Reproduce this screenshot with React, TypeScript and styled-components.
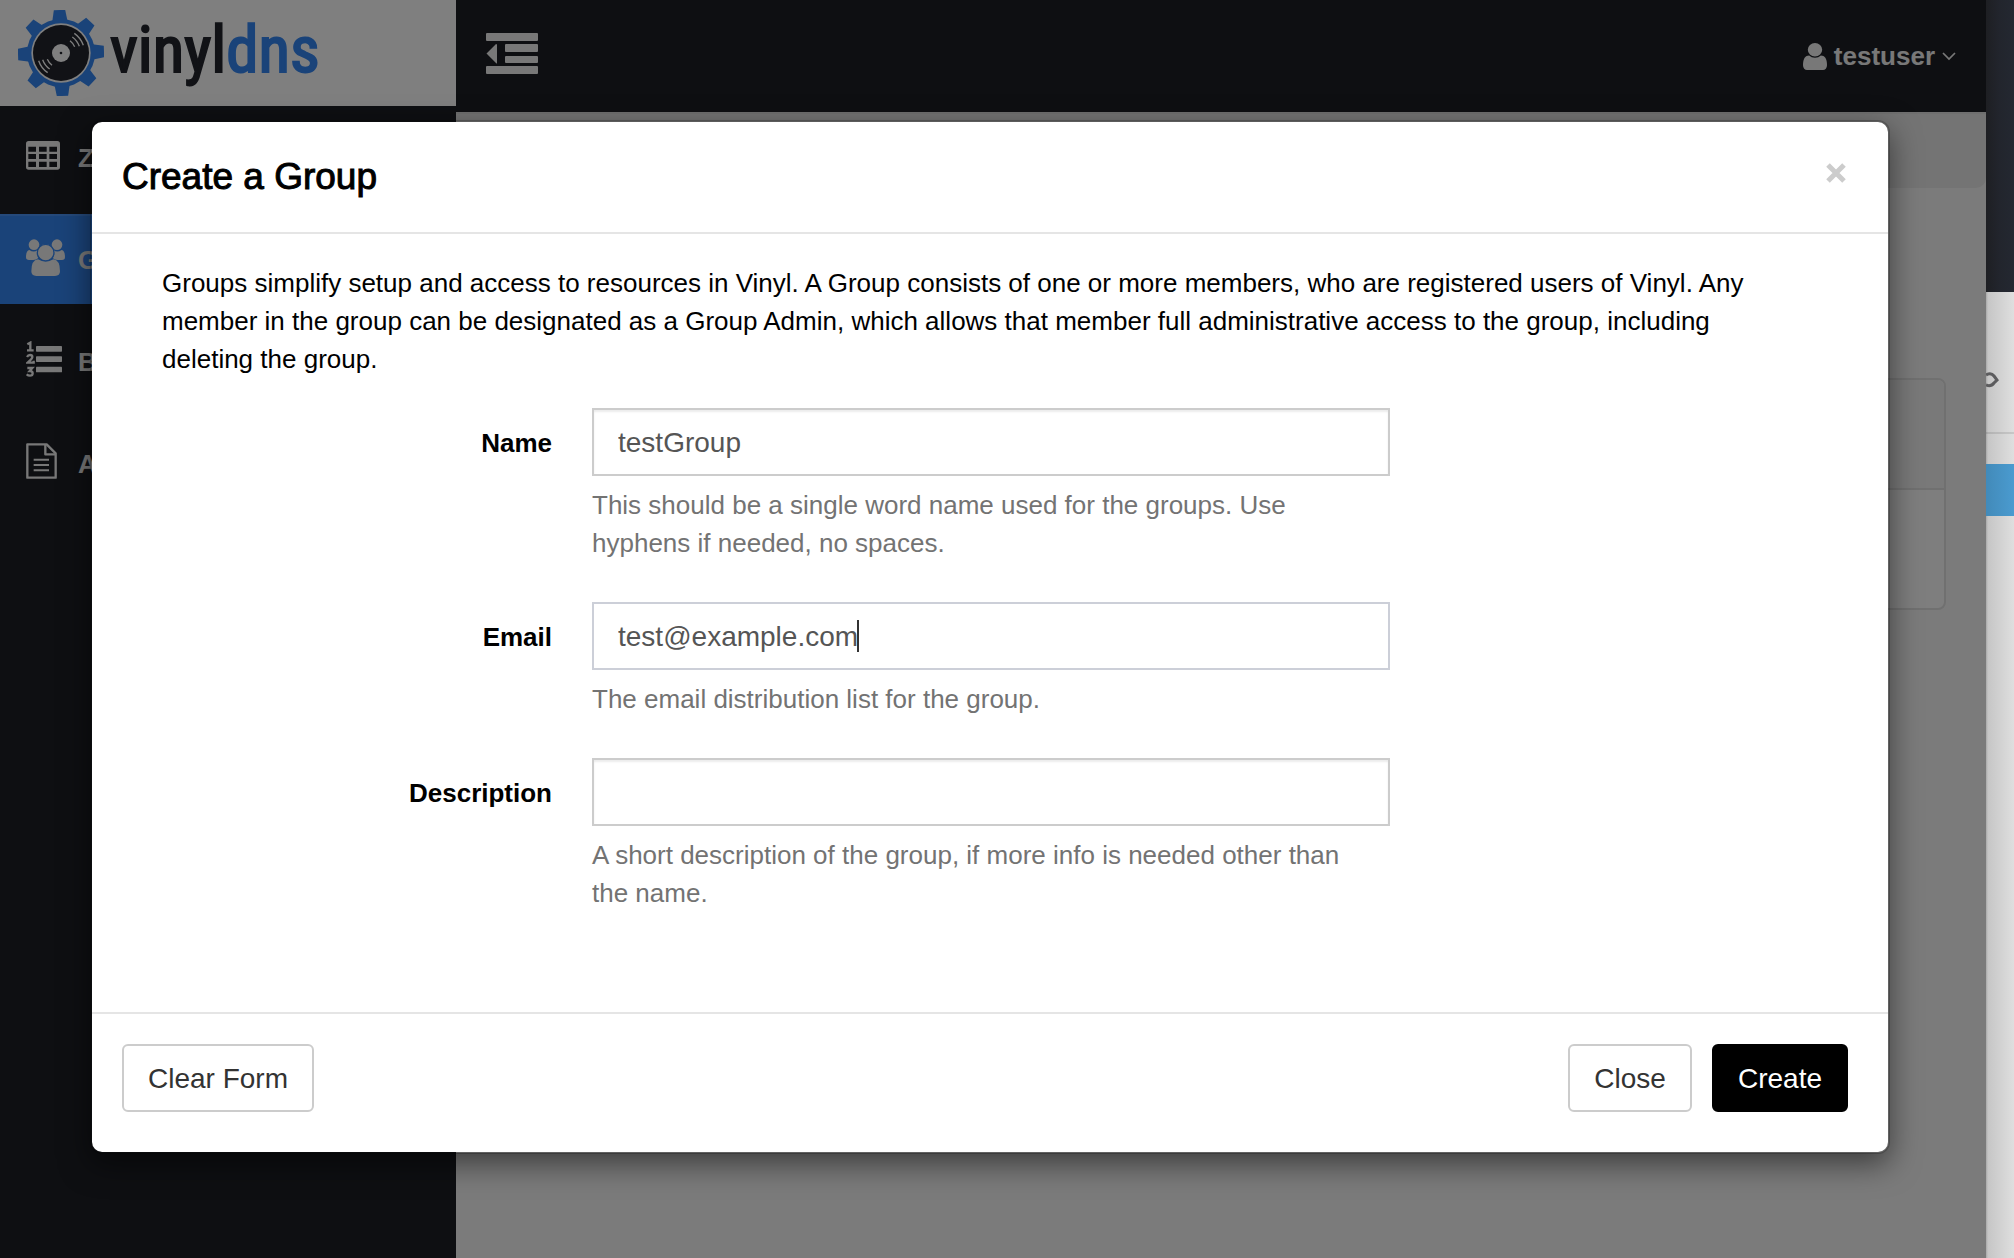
import React, { useState } from "react";
import styled, { createGlobalStyle, css } from "styled-components";

const GlobalStyle = createGlobalStyle`
  *, *::before, *::after { box-sizing: border-box; }
  body {
    margin: 0;
    overflow: hidden;
    font-family: "Liberation Sans", Arial, sans-serif;
    font-size: 26px;
    line-height: 38px;
    color: #000;
  }
`;

const Desktop = styled.div`
  display: flex;
  min-height: 100vh;
`;

const Browser = styled.div`
  position: relative;
  flex: 1;
  min-width: 0;
  display: flex;
  background: #f7f7f7;
`;

/* Sidebar */

const Sidebar = styled.nav`
  flex: 0 0 456px;
  background: #1c1f25;
`;

const Brand = styled.a`
  display: flex;
  align-items: center;
  gap: 6px;
  height: 106px;
  margin-bottom: 6px;
  padding-left: 18px;
  background: #fff;
  text-decoration: none;
`;

const Wordmark = styled.span`
  padding-bottom: 6px;
  font-family: "Roboto Condensed", "Liberation Sans", sans-serif;
  font-size: 65px;
  line-height: 90px;
  font-weight: 400;
  color: #22242c;
  -webkit-text-stroke: 2px currentColor;
`;

const WordmarkAccent = styled.span`
  color: #3486f2;
`;

const Menu = styled.ul`
  display: grid;
  gap: 12px;
  margin: 0;
  padding: 0;
  list-style: none;
`;

const MenuLink = styled.a<{ $active?: boolean }>`
  display: flex;
  align-items: center;
  height: 90px;
  padding: 0 26px;
  border-top: 2px solid transparent;
  color: #f0f0f0;
  font-weight: 700;
  text-decoration: none;
  ${(p) =>
    p.$active &&
    css`
      background: #3486f2;
      border-top-color: #4a93f5;
    `}
`;

const MenuIcon = styled.span`
  flex: 0 0 52px;
  display: flex;
  padding-bottom: 6px;
`;

/* Main column */

const Main = styled.main`
  flex: 1;
  min-width: 0;
`;

const TopBar = styled.header`
  display: flex;
  align-items: center;
  justify-content: space-between;
  height: 112px;
  padding: 0 30px;
  background: #1c1f25;
`;

const BarButton = styled.button`
  display: flex;
  align-items: center;
  gap: 7px;
  padding: 0;
  border: 0;
  background: none;
  color: #f0f0f0;
  font: inherit;
  font-weight: 700;
`;

const ToggleButton = styled(BarButton)`
  padding-bottom: 4px;
`;

const Breadcrumb = styled.div`
  height: 76px;
  border-top: 2px solid #dedede;
  border-radius: 0 0 10px 0;
  background: #e9e9e9;
`;

const Panel = styled.section`
  margin: 190px 40px 0;
  border: 2px solid #e0e0e0;
  border-radius: 8px;
  background: #fdfdfd;
`;

const PanelHead = styled.div`
  height: 110px;
  border-bottom: 2px solid #e0e0e0;
  border-radius: 6px 6px 0 0;
  background: #f3f3f3;
`;

const PanelBody = styled.div`
  height: 118px;
`;

/* Modal */

const Backdrop = styled.div`
  position: absolute;
  inset: 0;
  padding: 120px 96px 104px 90px;
  background: rgba(0, 0, 0, 0.5);
`;

const Dialog = styled.div`
  border: 2px solid rgba(0, 0, 0, 0.2);
  border-radius: 12px;
  background: #fff;
  background-clip: padding-box;
  box-shadow: 0 10px 30px rgba(0, 0, 0, 0.5);
`;

const DialogHead = styled.div`
  display: flex;
  justify-content: space-between;
  padding: 30px;
  border-bottom: 2px solid #e5e5e5;
`;

const DialogTitle = styled.h1`
  margin: 0;
  font-size: 37px;
  line-height: 50px;
  font-weight: 400;
  -webkit-text-stroke: 1px #000;
`;

const CloseIcon = styled.button`
  display: flex;
  align-self: flex-start;
  margin: 11px 12px;
  padding: 0;
  border: 0;
  background: none;
  color: #ccc;
`;

const DialogBody = styled.div`
  padding: 30px 70px 60px;
`;

const Intro = styled.p`
  margin: 0 0 30px;
  padding-right: 30px;
`;

const Field = styled.div`
  display: grid;
  grid-template-columns: 390px minmax(0, 798px);
  column-gap: 40px;
  margin-bottom: 40px;
`;

const Label = styled.label`
  line-height: 70px;
  font-weight: 700;
  text-align: right;
`;

const InputWrap = styled.div`
  position: relative;
`;

const Input = styled.input<{ $focused?: boolean }>`
  display: block;
  width: 100%;
  height: 68px;
  padding: 2px 24px 0;
  border: 2px solid ${(p) => (p.$focused ? "#cccfd8" : "#ccc")};
  border-radius: 0;
  outline: none;
  background: #fff;
  box-shadow: ${(p) => (p.$focused ? "none" : "inset 0 2px 2px rgba(0, 0, 0, 0.08)")};
  color: #555;
  font: inherit;
  font-size: 28px;
`;

const Caret = styled.span`
  position: absolute;
  top: 18px;
  left: 265px;
  width: 2px;
  height: 32px;
  background: #333;
`;

const Help = styled.p`
  margin: 10px 0 0;
  padding-right: 20px;
  color: #737373;
`;

const DialogFoot = styled.div`
  display: flex;
  gap: 20px;
  padding: 30px 40px 40px 30px;
  border-top: 2px solid #e5e5e5;
`;

const Button = styled.button<{ $primary?: boolean; $pushed?: boolean }>`
  height: 68px;
  padding: 2px 24px 0;
  border: 2px solid ${(p) => (p.$primary ? "#000" : "#ccc")};
  border-radius: 6px;
  background: ${(p) => (p.$primary ? "#000" : "#fff")};
  color: ${(p) => (p.$primary ? "#fff" : "#333")};
  margin-right: ${(p) => (p.$pushed ? "auto" : "0")};
  font: inherit;
  font-size: 28px;
`;

/* Window lying behind the browser */

const BackWindow = styled.aside`
  flex: 0 0 28px;
  display: flex;
  flex-direction: column;
  background: linear-gradient(90deg, #a8a8a8 0, #c6c6c6 2px, #dfdfdf 28px);
`;

const BackHead = styled.div`
  height: 292px;
  background: linear-gradient(90deg, #1e1f23 0, #22252d 14px, #242831 28px);
`;

const BackRow = styled.div`
  display: flex;
  align-items: flex-end;
  height: 142px;
  padding-bottom: 44px;
  border-bottom: 2px solid rgba(0, 0, 0, 0.1);
`;

const BackStripe = styled.div`
  height: 52px;
  margin-top: 30px;
  background: linear-gradient(90deg, #428ab9, #4a9bd0);
`;

const Gear = () => (
  <svg width="86" height="86" viewBox="24 30 258 258" aria-hidden="true">
    <g fill="#3486f2">
      <circle cx="153" cy="159" r="102" />
      {[0, 45, 90, 135, 180, 225, 270, 315].map((a) => (
        <path key={a} d="M136 30h34l7 40h-48z" transform={`rotate(${a - 2} 153 159)`} />
      ))}
    </g>
    <circle cx="153" cy="159" r="89" fill="#fff" />
    <circle cx="153" cy="159" r="84" fill="#22242c" />
    <circle cx="153" cy="159" r="27" fill="#fff" />
    <circle cx="153" cy="159" r="4" fill="#22242c" />
    {[0, 180].map((a) => (
      <g key={a} transform={`rotate(${a} 153 159)`} fill="none" stroke="#fff" strokeWidth="4">
        <path d="M180 122A46 46 0 0 1 194 140" />
        <path d="M187 111A59 59 0 0 1 208 139" />
        <path d="M193 100A71 71 0 0 1 220 136" />
      </g>
    ))}
  </svg>
);

const TableIcon = () => (
  <svg width="34" height="29" viewBox="78 28 102 87" aria-hidden="true">
    <path
      fill="currentColor"
      fillRule="evenodd"
      d="M86 28h86q8 0 8 8v70q0 8-8 8H86q-8 0-8-8V36q0-8 8-8zM85 45v15h23V45zM117 45v15h23V45zM148 45v15h23V45zM85 67v15h23V67zM117 67v15h23V67zM148 67v15h23V67zM85 90v16h23V90zM117 90v16h23V90zM148 90v16h23V90z"
    />
  </svg>
);

const GroupIcon = () => (
  <svg width="39" height="37" viewBox="77 325 117 111" fill="currentColor" aria-hidden="true">
    <circle cx="101" cy="342" r="16" />
    <circle cx="170" cy="342" r="16" />
    <path d="M87 358q13 9 24 1-3 14 4 22-7 7-16 7H86q-9 0-9-8 0-20 10-22z" />
    <path d="M184 358q-13 9-24 1 3 14-4 22 7 7 16 7h13q9 0 9-8 0-20-10-22z" />
    <circle cx="136" cy="366" r="25" stroke="#3486f2" strokeWidth="4" />
    <path d="M113 386q23 14 46 0 20 2 20 36 0 14-15 14h-56q-15 0-15-14 0-34 20-36z" />
  </svg>
);

const ListIcon = () => (
  <svg width="36" height="36" viewBox="78 633 108 108" aria-hidden="true">
    <g fill="currentColor">
      <rect x="108" y="648" width="78" height="17" rx="2" />
      <rect x="108" y="679" width="78" height="17" rx="2" />
      <rect x="108" y="710" width="78" height="17" rx="2" />
    </g>
    <g fill="none" stroke="currentColor" strokeWidth="7">
      <path d="M82 643l9-5v22M81 661h20" />
      <path d="M81 681q3-6 9-6 7 0 7 6 0 5-14 17h18v-6" />
      <path d="M82 714h15l-8 9q9 0 9 7 0 7-8 7-6 0-10-4" />
    </g>
  </svg>
);

const DocIcon = () => (
  <svg width="31" height="36" viewBox="78 939 93 108" aria-hidden="true">
    <g fill="none" stroke="currentColor" strokeWidth="7" strokeLinejoin="round">
      <path d="M82 943h58l27 27v73H82z" />
      <path d="M136 943v30h31" />
      <path d="M101 989h46M101 1005h46M101 1021h46" strokeWidth="6" />
    </g>
  </svg>
);

const OutdentIcon = () => (
  <svg width="52" height="42" viewBox="0 0 52 42" fill="currentColor" aria-hidden="true">
    <rect width="52" height="8" rx="1" />
    <rect x="19" y="11" width="33" height="8" rx="1" />
    <rect x="19" y="23" width="33" height="7" rx="1" />
    <rect y="33" width="52" height="8" rx="1" />
    <path d="M10 11q1 0 1 1v18q0 1-1 0L1 21q-1-1 0-1z" />
  </svg>
);

const UserIcon = () => (
  <svg width="24" height="27" viewBox="0 128 1280 1536" preserveAspectRatio="none" aria-hidden="true">
    <path
      fill="currentColor"
      d="M1280 1399q0 109-62.500 187T1067 1664H213q-88 0-150.500-78T0 1399q0-85 8.500-160.500t31.500-152 58.500-131 94-89T327 832q131 128 313 128t313-128q76 0 134.500 34.500t94 89 58.500 131 31.500 152 8.500 160.500zm-256-887q0 159-112.500 271.500T640 896 368.500 783.500 256 512t112.500-271.500T640 128t271.500 112.500T1024 512z"
    />
  </svg>
);

const ChevronIcon = () => (
  <svg width="14" height="9" viewBox="0 0 14 9" aria-hidden="true">
    <path d="M1 1l6 6 6-6" fill="none" stroke="currentColor" strokeWidth="1.700" />
  </svg>
);

const CrossIcon = () => (
  <svg width="20" height="20" viewBox="0 0 20 20" aria-hidden="true">
    <path d="M2 2l16 16M18 2L2 18" stroke="currentColor" strokeWidth="5" />
  </svg>
);

const menu = [
  { short: "Z", label: "Zones", icon: <TableIcon /> },
  { short: "G", label: "Groups", icon: <GroupIcon />, active: true },
  { short: "B", label: "Batch Changes", icon: <ListIcon /> },
  { short: "A", label: "API Documentation", icon: <DocIcon /> },
];

export default function App() {
  const [name, setName] = useState("testGroup");
  const [email, setEmail] = useState("test@example.com");
  const [description, setDescription] = useState("");

  return (
    <Desktop>
      <GlobalStyle />
      <Browser>
        <Sidebar>
          <Brand href="#">
            <Gear />
            <Wordmark>
              vinyl<WordmarkAccent>dns</WordmarkAccent>
            </Wordmark>
          </Brand>
          <Menu>
            {menu.map((item) => (
              <li key={item.label}>
                <MenuLink href="#" aria-label={item.label} $active={item.active}>
                  <MenuIcon>{item.icon}</MenuIcon>
                  {item.short}
                </MenuLink>
              </li>
            ))}
          </Menu>
        </Sidebar>
        <Main>
          <TopBar>
            <ToggleButton type="button" aria-label="Toggle sidebar">
              <OutdentIcon />
            </ToggleButton>
            <BarButton type="button">
              <UserIcon />
              testuser
              <ChevronIcon />
            </BarButton>
          </TopBar>
          <Breadcrumb />
          <Panel>
            <PanelHead />
            <PanelBody />
          </Panel>
        </Main>

        <Backdrop>
          <Dialog role="dialog" aria-labelledby="dialog-title">
            <DialogHead>
              <DialogTitle id="dialog-title">Create a Group</DialogTitle>
              <CloseIcon type="button" aria-label="Dismiss">
                <CrossIcon />
              </CloseIcon>
            </DialogHead>
            <DialogBody>
              <Intro>
                Groups simplify setup and access to resources in Vinyl. A Group consists of one or more
                members, who are registered users of Vinyl. Any member in the group can be designated as a
                Group Admin, which allows that member full administrative access to the group, including
                deleting the group.
              </Intro>
              <Field>
                <Label htmlFor="name">Name</Label>
                <div>
                  <Input id="name" value={name} onChange={(e) => setName(e.target.value)} />
                  <Help>
                    This should be a single word name used for the groups. Use hyphens if needed, no spaces.
                  </Help>
                </div>
              </Field>
              <Field>
                <Label htmlFor="email">Email</Label>
                <div>
                  <InputWrap>
                    <Input id="email" $focused value={email} onChange={(e) => setEmail(e.target.value)} />
                    <Caret />
                  </InputWrap>
                  <Help>The email distribution list for the group.</Help>
                </div>
              </Field>
              <Field>
                <Label htmlFor="description">Description</Label>
                <div>
                  <Input
                    id="description"
                    value={description}
                    onChange={(e) => setDescription(e.target.value)}
                  />
                  <Help>
                    A short description of the group, if more info is needed other than the name.
                  </Help>
                </div>
              </Field>
            </DialogBody>
            <DialogFoot>
              <Button type="button" $pushed>
                Clear Form
              </Button>
              <Button type="button">Close</Button>
              <Button type="button" $primary>
                Create
              </Button>
            </DialogFoot>
          </Dialog>
        </Backdrop>
      </Browser>
      <BackWindow>
        <BackHead />
        <BackRow>
          <svg width="13" height="16" viewBox="0 0 13 16" aria-hidden="true">
            <path d="M0 3q5-3 8 1l3 4-3 3q-3 4-8 2" fill="none" stroke="#5c5c5e" strokeWidth="3" />
          </svg>
        </BackRow>
        <BackStripe />
      </BackWindow>
    </Desktop>
  );
}
